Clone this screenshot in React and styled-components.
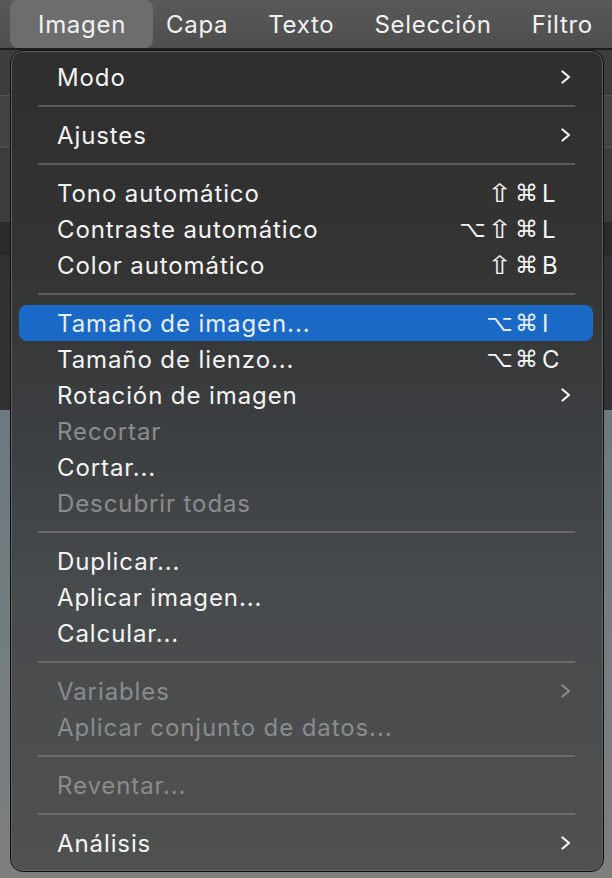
import styled, { createGlobalStyle } from "styled-components";

const GlobalStyle = createGlobalStyle`
  html, body {
    margin: 0;
    padding: 0;
    background: #333;
  }
  body {
    font-family: "Inter", "Liberation Sans", sans-serif;
    -webkit-font-smoothing: antialiased;
  }
`;

const menuBarItems = ["Imagen", "Capa", "Texto", "Selección", "Filtro"];

// each section is a group of rows, separators go between sections
const sections = [
  [{ label: "Modo", sub: true }],
  [{ label: "Ajustes", sub: true }],
  [
    { label: "Tono automático", keys: ["⇧", "⌘", "L"] },
    { label: "Contraste automático", keys: ["⌥", "⇧", "⌘", "L"] },
    { label: "Color automático", keys: ["⇧", "⌘", "B"] },
  ],
  [
    { label: "Tamaño de imagen...", keys: ["⌥", "⌘", "I"], active: true },
    { label: "Tamaño de lienzo...", keys: ["⌥", "⌘", "C"] },
    { label: "Rotación de imagen", sub: true },
    { label: "Recortar", disabled: true },
    { label: "Cortar..." },
    { label: "Descubrir todas", disabled: true },
  ],
  [
    { label: "Duplicar..." },
    { label: "Aplicar imagen..." },
    { label: "Calcular..." },
  ],
  [
    { label: "Variables", sub: true, disabled: true },
    { label: "Aplicar conjunto de datos...", disabled: true },
  ],
  [{ label: "Reventar...", disabled: true }],
  [{ label: "Análisis", sub: true }],
];

const backdropBands = [
  { h: 45, c: "#3d3d3d" },
  { h: 1, c: "#565656" },
  { h: 51, c: "#444444" },
  { h: 1, c: "#545454" },
  { h: 74, c: "#3c3c3c" },
  { h: 33, c: "#2a2a2a" },
  { h: 155, c: "#313233" },
];

function Chevron({ dim }) {
  return (
    <ChevronSvg viewBox="0 0 10 14" $dim={dim}>
      <polyline points="1.5,1.5 8,7 1.5,12.5" />
    </ChevronSvg>
  );
}

function MenuRow({ item }) {
  return (
    <Row $active={item.active} $disabled={item.disabled}>
      <Label>{item.label}</Label>
      {item.keys && (
        <Shortcut>
          {item.keys.map((k, i) =>
            i === item.keys.length - 1 ? (
              <KeyLetter key={i}>{k}</KeyLetter>
            ) : (
              <KeySymbol key={i} $wide={k === "⇧"}>{k}</KeySymbol>
            )
          )}
        </Shortcut>
      )}
      {item.sub && <Chevron dim={item.disabled} />}
    </Row>
  );
}

export default function App() {
  return (
    <>
      <GlobalStyle />
      <Screen>
        <MenuBar>
          {menuBarItems.map((name, i) => (
            <BarItem key={name} $active={i === 0}>{name}</BarItem>
          ))}
        </MenuBar>
        <BarEdge />
        <Backdrop>
          {backdropBands.map((b, i) => (
            <Band key={i} $h={b.h} $c={b.c} />
          ))}
          <Canvas />
        </Backdrop>

        <Dropdown>
          {sections.map((section, si) => (
            <Section key={si}>
              {si > 0 && <Separator />}
              {section.map((item) => (
                <MenuRow key={item.label} item={item} />
              ))}
            </Section>
          ))}
        </Dropdown>
      </Screen>
    </>
  );
}

const Screen = styled.div`
  position: relative;
  width: 612px;
  height: 878px;
  overflow: hidden;
  display: flex;
  flex-direction: column;
`;

const MenuBar = styled.div`
  display: flex;
  align-items: stretch;
  height: 48px;
  padding-left: 10px;
  background: linear-gradient(180deg, #595959 0%, #4e4e4e 100%);
`;

const BarItem = styled.div`
  display: flex;
  align-items: center;
  padding: ${(p) => (p.$active ? "0 27px 0 28px" : "0 20px")};
  margin-right: ${(p) => (p.$active ? "-7px" : "0")};
  border-radius: 8px;
  background: ${(p) => (p.$active ? "#6d6d6d" : "transparent")};
  color: #f2f2f2;
  font-size: 24px;
  letter-spacing: 0.7px;
  white-space: nowrap;
`;

const BarEdge = styled.div`
  height: 2px;
  background: #1e1e1e;
`;

const Backdrop = styled.div`
  flex: 1;
  display: flex;
  flex-direction: column;
`;

const Band = styled.div`
  height: ${(p) => p.$h}px;
  background: ${(p) => p.$c};
`;

const Canvas = styled.div`
  flex: 1;
  background: linear-gradient(180deg, #6c7880 0%, #737c80 40%, #7d7e7e 100%);
`;

const Dropdown = styled.div`
  position: absolute;
  top: 50px;
  left: 10px;
  width: 594px;
  height: 822px;
  box-sizing: border-box;
  padding: 8px 10px 10px 8px;
  border-radius: 13px;
  border: 1px solid #0f0f0f;
  box-shadow: inset 0 0 0 1px #5f6060;
  background: linear-gradient(
    180deg,
    #2f2f2f 0%,
    #333333 25%,
    #3b3e40 45%,
    #474a4c 65%,
    #4f5151 100%
  );
  display: flex;
  flex-direction: column;
`;

const Section = styled.div`
  display: flex;
  flex-direction: column;
`;

const Separator = styled.div`
  height: 22px;
  margin: 0 18px 0 19px;
  display: flex;
  align-items: center;
  &::after {
    content: "";
    flex: 1;
    height: 2px;
    background: rgba(150, 150, 150, 0.42);
  }
`;

const Row = styled.div`
  display: flex;
  align-items: center;
  height: 36px;
  padding: 0 22px 0 38px;
  border-radius: 8px;
  background: ${(p) => (p.$active ? "#1b69c6" : "transparent")};
  color: ${(p) =>
    p.$active ? "#e6eefa" : p.$disabled ? "#8a8c8d" : "#f4f4f4"};
  font-size: 24px;
  letter-spacing: 0.9px;
`;

const Label = styled.span`
  flex: 1;
  white-space: nowrap;
`;

const Shortcut = styled.span`
  display: flex;
  align-items: center;
  margin-right: 15px;
  letter-spacing: 0;
`;

const KeySymbol = styled.span`
  display: inline-block;
  width: 27px;
  text-align: center;
  font-family: "DejaVu Sans", sans-serif;
  font-size: 23px;
  transform: ${(p) => (p.$wide ? "scale(1.35, 1.08)" : "none")};
`;

const KeyLetter = styled.span`
  display: inline-block;
  width: 14px;
  margin-left: 2px;
  font-size: 24px;
`;

const ChevronSvg = styled.svg`
  width: 10px;
  height: 14px;
  fill: none;
  stroke: ${(p) => (p.$dim ? "#8a8c8d" : "#f4f4f4")};
  stroke-width: 2.2;
  stroke-linecap: round;
  stroke-linejoin: round;
`;
